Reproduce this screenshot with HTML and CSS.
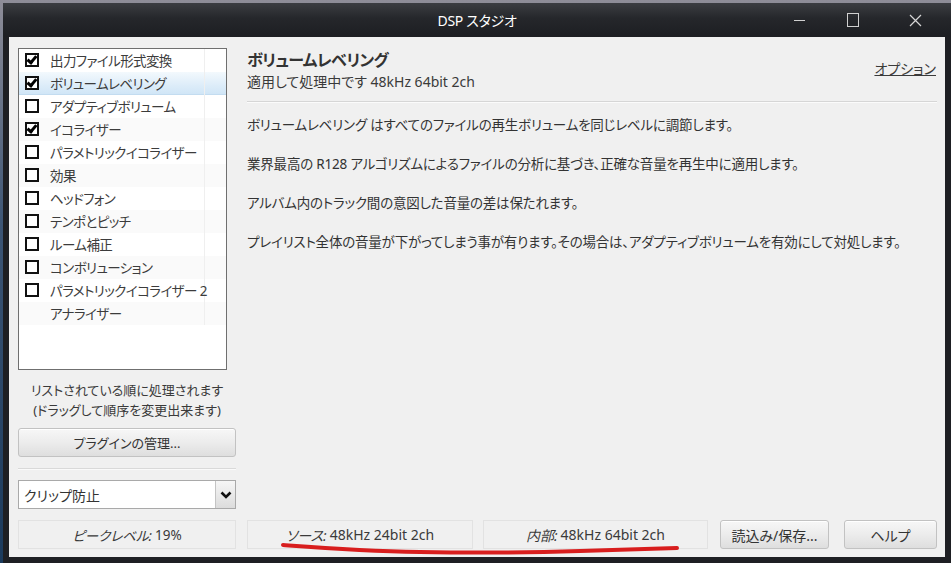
FILE: index.html
```html
<!DOCTYPE html>
<html lang="ja">

<head>
    <meta charset="UTF-8">
    <meta name="viewport" content="width=device-width, initial-scale=1.0">
    <title>DSP スタジオ</title>
    <link rel="stylesheet" href="styles.css">
</head>

<body>
    <div class="window">
        <div class="titlebar">
            <div></div>
            <div class="title">DSP スタジオ</div>
            <div class="controls">
                <span class="ctl ctl-min"><i></i></span>
                <span class="ctl ctl-max"><i></i></span>
                <span class="ctl ctl-close">
                    <svg width="13" height="13" viewBox="0 0 13 13">
                        <path d="M1 1 L12 12 M12 1 L1 12" stroke="#d6d6d6" stroke-width="1.2" fill="none" />
                    </svg>
                </span>
            </div>
        </div>

        <div class="client">
            <div class="left">
                <div class="listbox">
                    <div class="row"><span class="cell"><span class="check on"></span>出力ファイル形式変換</span><span class="cell-rest"></span></div>
                    <div class="row selected"><span class="cell"><span class="check on"></span>ボリュームレベリング</span><span class="cell-rest"></span></div>
                    <div class="row"><span class="cell"><span class="check"></span>アダプティブボリューム</span><span class="cell-rest"></span></div>
                    <div class="row alt"><span class="cell"><span class="check on"></span>イコライザー</span><span class="cell-rest"></span></div>
                    <div class="row"><span class="cell"><span class="check"></span>パラメトリックイコライザー</span><span class="cell-rest"></span></div>
                    <div class="row alt"><span class="cell"><span class="check"></span>効果</span><span class="cell-rest"></span></div>
                    <div class="row"><span class="cell"><span class="check"></span>ヘッドフォン</span><span class="cell-rest"></span></div>
                    <div class="row alt"><span class="cell"><span class="check"></span>テンポとピッチ</span><span class="cell-rest"></span></div>
                    <div class="row"><span class="cell"><span class="check"></span>ルーム補正</span><span class="cell-rest"></span></div>
                    <div class="row alt"><span class="cell"><span class="check"></span>コンボリューション</span><span class="cell-rest"></span></div>
                    <div class="row"><span class="cell"><span class="check"></span>パラメトリックイコライザー 2</span><span class="cell-rest"></span></div>
                    <div class="row alt"><span class="cell"><span class="nocheck"></span>アナライザー</span><span class="cell-rest"></span></div>
                </div>

                <p class="hint">リストされている順に処理されます<br>(ドラッグして順序を変更出来ます)</p>

                <button class="btn btn-plugins">プラグインの管理...</button>

                <div class="sep"></div>

                <div class="select">
                    <span class="select-text">クリップ防止</span>
                    <span class="select-arrow">
                        <svg width="12" height="8" viewBox="0 0 12 8">
                            <path d="M1.5 1.5 L6 6 L10.5 1.5" stroke="#111" stroke-width="2.6" fill="none" />
                        </svg>
                    </span>
                </div>

                <div class="panel"><em>ピークレベル:</em> 19%</div>
            </div>

            <div class="right">
                <div class="head">
                    <div>
                        <h1>ボリュームレベリング</h1>
                        <p class="sub">適用して処理中です 48kHz 64bit 2ch</p>
                    </div>
                    <a class="link" href="#">オプション</a>
                </div>

                <div class="desc">
                    <p>ボリュームレベリング はすべてのファイルの再生ボリュームを同じレベルに調節します。</p>
                    <p>業界最高の R128 アルゴリズムによるファイルの分析に基づき、正確な音量を再生中に適用します。</p>
                    <p>アルバム内のトラック間の意図した音量の差は保たれます。</p>
                    <p>プレイリスト全体の音量が下がってしまう事が有ります。その場合は、アダプティブボリュームを有効にして対処します。</p>
                </div>

                <div class="footer">
                    <div class="panel panel-src"><em>ソース:</em> 48kHz 24bit 2ch</div>
                    <div class="panel panel-int"><em>内部:</em> 48kHz 64bit 2ch</div>
                    <button class="btn btn-load">読込み/保存...</button>
                    <button class="btn btn-help">ヘルプ</button>
                </div>
            </div>
        </div>
    </div>

    <!-- hand-drawn red mark over the screenshot -->
    <svg class="scribble" width="951" height="563" viewBox="0 0 951 563">
        <path d="M283 545 C 310 547, 360 551, 420 552 C 470 553, 520 553, 580 551 C 620 550, 650 549, 677 548"
            stroke="#d81e1e" stroke-width="4" stroke-linecap="round" fill="none" />
    </svg>
</body>

</html>
```

FILE: styles.css
```css
body {
    margin: 0;
    width: 951px;
    height: 563px;
    overflow: hidden;
    background: linear-gradient(#8e8d98, #3c5575 40%, #1b3a5c);
    font-family: "Noto Sans", "Noto Sans CJK JP", sans-serif;
    font-feature-settings: "palt";
    color: #3a3a3a;
}

.window {
    margin: 3px 0 0 3px;
    width: 948px;
    height: 560px;
    background: #1e1f23;
    display: flex;
    flex-direction: column;
}

.titlebar {
    height: 34px;
    flex: none;
    display: grid;
    grid-template-columns: 1fr auto 1fr;
    align-items: center;
    background: linear-gradient(#3b3d42, #25272b 45%, #1d1e22);
}

.title {
    color: #fff;
    font-size: 14px;
    letter-spacing: -0.3px;
}

.controls {
    justify-self: end;
    display: flex;
    height: 34px;
}

.ctl {
    display: flex;
    align-items: center;
    justify-content: center;
    height: 34px;
}

.ctl-min {
    width: 54px;
}

.ctl-min i {
    width: 11px;
    height: 1px;
    background: #d0d0d0;
}

.ctl-max {
    width: 54px;
}

.ctl-max i {
    width: 10px;
    height: 12px;
    border: 1px solid #d0d0d0;
}

.ctl-close {
    width: 70px;
    margin-right: 1px;
}

.client {
    margin: 0 6px;
    height: 520px;
    background: #f0f0f0;
    display: flex;
    gap: 11px;
    padding: 11px 8px 0 9px;
    box-sizing: border-box;
}

/* left column */
.left {
    width: 218px;
    flex: none;
    display: flex;
    flex-direction: column;
}

.listbox {
    width: 209px;
    height: 322px;
    box-sizing: border-box;
    border: 1px solid #6f6f6f;
    background: #fff;
}

.row {
    display: flex;
    height: 23px;
    font-size: 13.5px;
    letter-spacing: -0.6px;
    color: #3c3c3c;
}

.row.alt {
    background: #fafafa;
}

.row.selected {
    background: linear-gradient(#f3f9fd, #dcecf9 60%, #cfe5f6);
    box-shadow: inset 0 -1px 0 #c3dcf0;
}

.cell {
    width: 186px;
    display: flex;
    align-items: center;
    padding-bottom: 2px;
    box-sizing: border-box;
    border-right: 1px solid #efefef;
    white-space: nowrap;
}

.cell-rest {
    flex: 1;
}

.check,
.nocheck {
    width: 14px;
    height: 14px;
    box-sizing: border-box;
    margin: 0 11px 0 6px;
    flex: none;
    position: relative;
}

.check {
    border: 2px solid #111;
    background: #fff;
}

.check.on::after {
    content: "";
    position: absolute;
    left: 2px;
    top: -1px;
    width: 3px;
    height: 7px;
    border: solid #000;
    border-width: 0 3px 3px 0;
    transform: rotate(40deg);
}

.hint {
    margin: 10px 0 0;
    text-align: center;
    font-size: 13px;
    line-height: 20px;
    color: #3a3a3a;
}

.btn {
    font-family: inherit;
    font-feature-settings: "palt";
    font-size: 13px;
    color: #333;
    background: linear-gradient(#f7f7f7, #ececec 50%, #dedede);
    border: 1px solid #c2c2c2;
    border-radius: 3px;
    height: 29px;
    padding: 0;
    box-shadow: inset 0 1px 0 #fff;
}

.btn-plugins {
    margin-top: 8px;
    width: 218px;
}

.sep {
    margin-top: 11px;
    height: 1px;
    background: #d9d9d9;
    box-shadow: 0 1px 0 #fafafa;
}

.select {
    margin-top: 11px;
    height: 29px;
    box-sizing: border-box;
    border: 1px solid #a9a9a9;
    background: #fff;
    display: flex;
    align-items: stretch;
}

.select-text {
    flex: 1;
    display: flex;
    align-items: center;
    padding-left: 5px;
    font-size: 14px;
    color: #333;
}

.select-arrow {
    width: 19px;
    border-left: 1px solid #c4c4c4;
    background: linear-gradient(#f6f6f6, #dcdcdc);
    display: flex;
    align-items: center;
    justify-content: center;
}

.panel {
    margin-top: 11px;
    height: 29px;
    box-sizing: border-box;
    border: 1px solid #e2e2e2;
    display: flex;
    align-items: center;
    justify-content: center;
    font-size: 13.5px;
    color: #3a3a3a;
}

.panel em {
    margin-right: 3px;
}

/* right column */
.right {
    flex: 1;
    display: flex;
    flex-direction: column;
    padding-bottom: 8px;
}

.head {
    display: flex;
    justify-content: space-between;
    align-items: center;
    padding-top: 1px;
    padding-bottom: 8px;
    border-bottom: 1px solid #d6d6d6;
    box-shadow: 0 1px 0 #fbfbfb;
}

h1 {
    margin: 0;
    font-size: 16px;
    line-height: 22px;
    font-weight: bold;
    letter-spacing: -0.6px;
    color: #333;
}

.sub {
    margin: 0;
    font-size: 14px;
    line-height: 22px;
    color: #3a3a3a;
}

.link {
    color: #3a3a3a;
    font-size: 14px;
    margin-bottom: 6px;
    margin-right: 1px;
    text-decoration: underline;
}

.desc {
    padding-top: 13px;
}

.desc p {
    margin: 0 0 19px;
    font-size: 13.5px;
    line-height: 20px;
    letter-spacing: -0.2px;
    color: #333;
}

.footer {
    margin-top: auto;
    display: flex;
}

.footer .panel {
    margin-top: 0;
    font-size: 14px;
}

.panel-src {
    width: 226px;
}

.panel-int {
    width: 225px;
    margin-left: 10px;
}

.btn-load {
    width: 109px;
    margin-left: 12px;
    font-size: 14px;
}

.btn-help {
    width: 93px;
    margin-left: 15px;
    font-size: 14px;
}

.scribble {
    position: absolute;
    left: 0;
    top: 0;
    pointer-events: none;
}
```
